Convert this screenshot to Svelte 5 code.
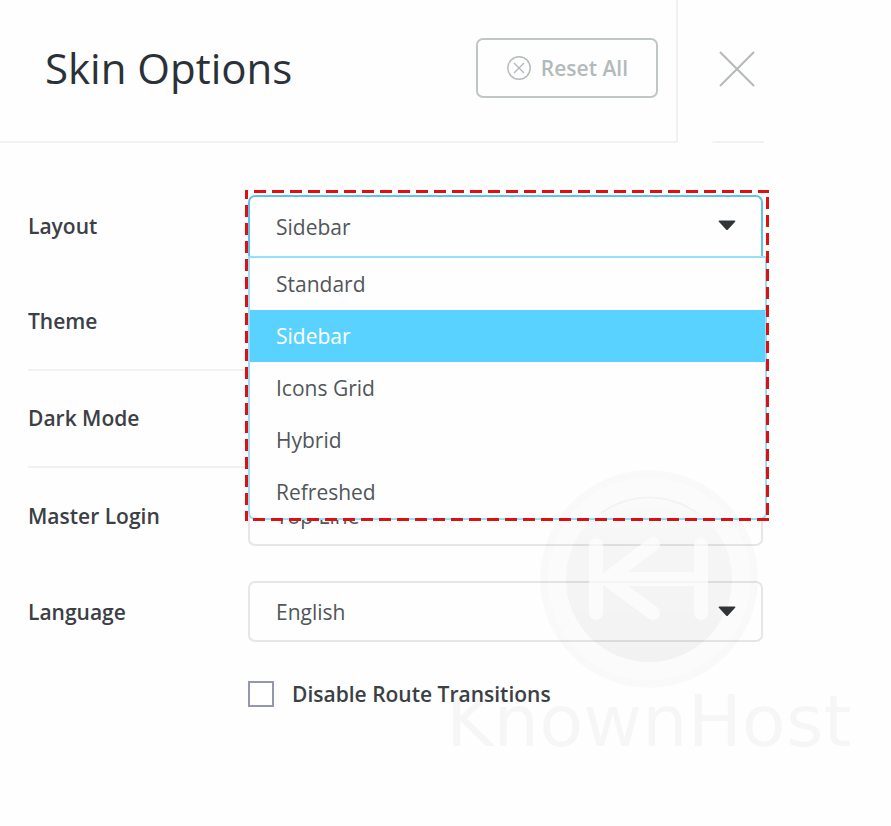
<script lang="ts">
	const layouts = ['Standard', 'Sidebar', 'Icons Grid', 'Hybrid', 'Refreshed'];

	let layout = $state('Sidebar');
	let masterLogin = $state('Top Line');
	let language = $state('English');
	let disableTransitions = $state(false);
</script>

{#snippet arrow()}
	<svg class="arrow" width="18" height="11" viewBox="0 0 18 11" aria-hidden="true">
		<path d="M1.5 0.5h15q1.6 0 .6 1.2L10 9.6q-1 1-2 0L.9 1.7Q-.1.5 1.5.5z" fill="#323537" />
	</svg>
{/snippet}

<main class="panel">
	<header class="header">
		<div class="heading">
			<h1>Skin Options</h1>
			<button type="button" class="reset">
				<svg width="24" height="24" viewBox="0 0 24 24" fill="none" stroke="#b3babb" aria-hidden="true">
					<circle cx="12" cy="12" r="11.2" stroke-width="1.5" />
					<path d="M7 7l10 10M17 7L7 17" stroke-width="1.4" />
				</svg>
				<span>Reset All</span>
			</button>
		</div>
		<div class="close-cell">
			<button type="button" class="close" aria-label="Close">
				<svg width="36" height="36" viewBox="0 0 36 36" aria-hidden="true">
					<path d="M1 1l34 34M35 1L1 35" stroke="#b4b9ba" stroke-width="2" />
				</svg>
			</button>
		</div>
	</header>

	<form class="options">
		<div class="row">
			<label for="layout">Layout</label>
			<div class="control open">
				<select id="layout" bind:value={layout}>
					{#each layouts as name (name)}
						<option>{name}</option>
					{/each}
				</select>
				{@render arrow()}
				<div class="list">
					{#each layouts as name (name)}
						<button
							type="button"
							class="item"
							class:is-active={layout === name}
							onclick={() => (layout = name)}
						>
							{name}
						</button>
					{/each}
				</div>
				<div class="dashes"></div>
			</div>
		</div>

		<div class="row divided">
			<span class="label">Theme</span>
		</div>

		<div class="row divided">
			<span class="label">Dark Mode</span>
		</div>

		<div class="row">
			<label for="master-login">Master Login</label>
			<div class="control">
				<select id="master-login" bind:value={masterLogin}>
					<option>Top Line</option>
				</select>
				{@render arrow()}
			</div>
		</div>

		<div class="row">
			<label for="language">Language</label>
			<div class="control">
				<select id="language" bind:value={language}>
					<option>English</option>
				</select>
				{@render arrow()}
			</div>
		</div>

		<div class="check">
			<input id="transitions" type="checkbox" bind:checked={disableTransitions} />
			<label for="transitions">Disable Route Transitions</label>
		</div>
	</form>

	<div class="watermark" aria-hidden="true">
		<svg width="220" height="220" viewBox="0 0 220 220">
			<defs>
				<linearGradient id="disc" x1="0" y1="0" x2="0" y2="1">
					<stop offset="0" stop-color="#000" stop-opacity="0" />
					<stop offset="0.3" stop-color="#000" stop-opacity="0.022" />
					<stop offset="1" stop-color="#000" stop-opacity="0.036" />
				</linearGradient>
			</defs>
			<circle cx="110" cy="110" r="109" fill="#000" fill-opacity="0.012" />
			<circle cx="110" cy="110" r="105" fill="none" stroke="#000" stroke-opacity="0.008" stroke-width="8" />
			<circle cx="110" cy="110" r="83" fill="url(#disc)" />
			<path d="M62 44a82 82 0 0 1 96 0" fill="none" stroke="#000" stroke-opacity="0.03" stroke-width="2" />
			<path
				d="M57 76v68M162 76v68M114 75L68 110L114 144M80 110H162"
				fill="none"
				stroke="#fdfdfd"
				stroke-opacity="0.7"
				stroke-width="14"
				stroke-linecap="round"
				stroke-linejoin="round"
			/>
		</svg>
		<span>KnownHost</span>
	</div>
</main>

<style>
	:global(body) {
		margin: 0;
		background: #fefefe;
	}

	.panel {
		position: relative;
		padding: 0 127px 66px 0;
		overflow: hidden;
		font-family: 'Open Sans', 'Noto Sans', sans-serif;
		font-size: 21px;
		line-height: 28px;
		color: #3b4045;
	}

	button,
	select {
		font: inherit;
		color: inherit;
		cursor: pointer;
	}

	.header {
		display: flex;
		height: 143px;
	}
	.heading {
		flex: 1;
		display: flex;
		align-items: center;
		justify-content: space-between;
		padding: 0 18px 6px 45px;
		border-right: 2px solid #f0f1f1;
		border-bottom: 2px solid #f0f1f1;
	}
	h1 {
		margin: 0;
		font-size: 42px;
		font-weight: 400;
		line-height: 56px;
		color: #2b3138;
	}
	.reset {
		display: flex;
		align-items: center;
		gap: 10px;
		height: 60px;
		padding: 0 28px 0 29px;
		background: transparent;
		border: 2px solid #c0c5c6;
		border-radius: 7px;
		font-weight: 600;
		color: #b3babb;
	}
	.close-cell {
		display: flex;
		align-items: center;
		justify-content: center;
		width: 54px;
		margin-left: 32px;
		padding-bottom: 6px;
		box-sizing: border-box;
		background: linear-gradient(90deg, transparent, #f0f1f1 6px) bottom / 100% 2px no-repeat;
	}
	.close {
		display: flex;
		padding: 0;
		background: none;
		border: none;
	}

	.options {
		padding: 35px 1px 0 28px;
	}
	.row {
		display: grid;
		grid-template-columns: 220px 1fr;
		align-items: center;
		min-height: 61px;
		padding: 17px 0 18px;
	}
	.row.divided {
		min-height: 60px;
		border-bottom: 2px solid #f0f1f1;
	}
	label,
	.label {
		font-weight: 600;
	}

	.control {
		position: relative;
		display: grid;
		align-items: center;
	}
	select {
		grid-area: 1 / 1;
		width: 100%;
		height: 61px;
		padding: 0 60px 0 26px;
		appearance: none;
		background: #fefefe;
		border: 2px solid #e5e6e7;
		border-radius: 7px;
		font-weight: 400;
		color: #51565a;
	}
	.arrow {
		grid-area: 1 / 1;
		justify-self: end;
		margin-right: 27px;
		pointer-events: none;
	}

	.open {
		z-index: 1;
	}
	.open select {
		border-color: #5fc4ea;
		border-bottom-width: 0;
		border-radius: 7px 7px 0 0;
	}
	.list {
		position: absolute;
		top: 61px;
		left: 0;
		right: -4px;
		background: #fefefe;
		border: 2px solid #95dffb;
		border-radius: 0 0 7px 7px;
		box-sizing: border-box;
		height: 264px;
	}
	.item {
		display: block;
		width: 100%;
		height: 52px;
		padding: 0 26px;
		background: none;
		border: none;
		text-align: left;
		color: #51565a;
	}
	.item.is-active {
		background: #59d2ff;
		color: #fff;
	}

	/* dashed marker round the open list, 12px dashes with 6px gaps */
	.dashes {
		--h: repeating-linear-gradient(90deg, #df1012 0 12px, transparent 12px 18px);
		--v: repeating-linear-gradient(#df1012 0 12px, transparent 12px 18px);
		position: absolute;
		top: -5px;
		left: -3px;
		right: -6px;
		height: 331px;
		pointer-events: none;
		background:
			var(--h) -9px 0 / 200% 3px no-repeat,
			var(--h) -10px 100% / 200% 3px no-repeat,
			var(--v) 0 -3px / 3px 200% no-repeat,
			var(--v) 100% -11px / 3px 200% no-repeat;
	}

	.check {
		display: flex;
		align-items: center;
		gap: 18px;
		padding: 20px 0 0 220px;
	}
	.check input {
		width: 26px;
		height: 26px;
		margin: 0;
		appearance: none;
		background: #fff;
		border: 2px solid #9398b0;
	}
	.check input:checked {
		background: #59d2ff;
	}

	.watermark {
		position: absolute;
		top: 469px;
		right: 8px;
		z-index: 2;
		display: flex;
		flex-direction: column;
		align-items: center;
		gap: 2px;
		width: 468px;
		pointer-events: none;
		font-family: 'DejaVu Sans', sans-serif;
		font-size: 72px;
		line-height: 60px;
		color: rgba(0, 0, 0, 0.03);
	}
</style>
